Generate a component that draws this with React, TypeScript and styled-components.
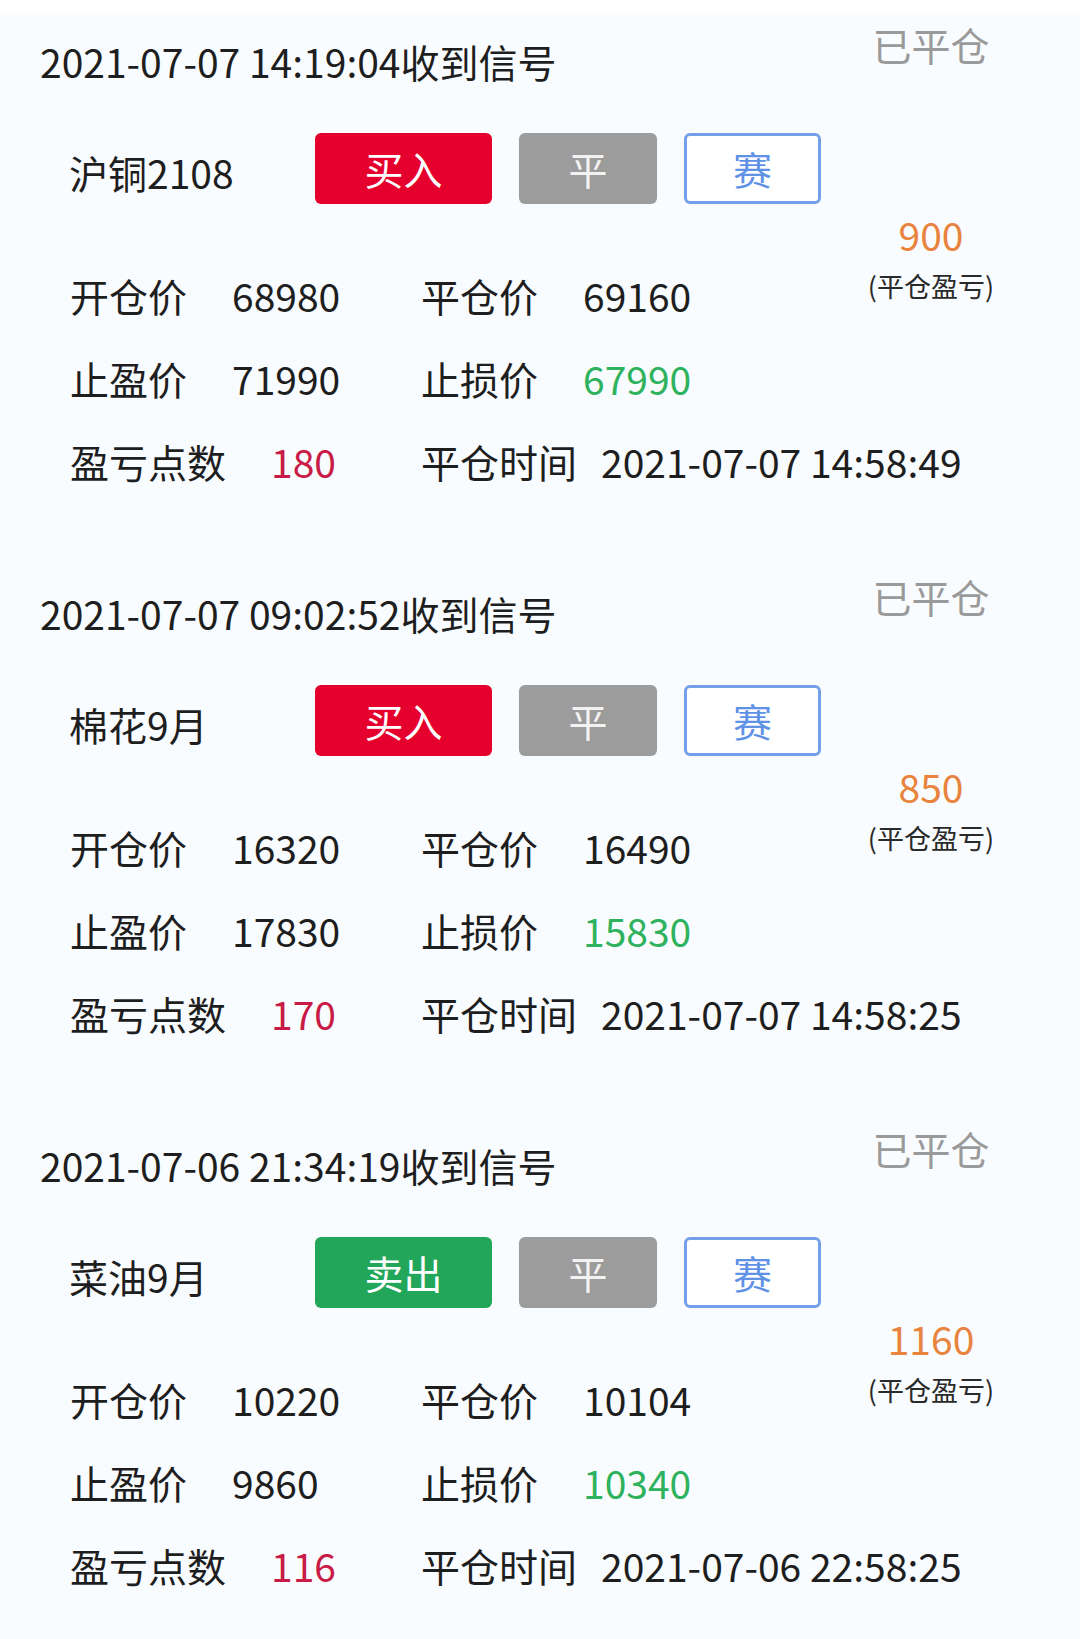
import React from "react";
import styled, { createGlobalStyle } from "styled-components";

const GlobalStyle = createGlobalStyle`
  html, body {
    margin: 0;
    padding: 0;
    background: #f9fcfe;
  }
  body {
    font-family: "Noto Sans CJK SC", "Noto Sans", sans-serif;
    color: #1e1e1e;
  }
`;

const Page = styled.div`
  width: 1080px;
  border-top: 15px solid #ffffff;
  background: #f9fcfe;
`;

const Card = styled.section`
  display: grid;
  grid-template-columns: 846px 170px;
  height: 552px;
  box-sizing: border-box;
`;

const Main = styled.div`
  display: flex;
  flex-direction: column;
  padding-top: 20px;
`;

const Header = styled.div`
  padding-left: 40px;
  font-size: 39px;
  line-height: 52px;
  color: #1e1e1e;
  white-space: nowrap;
`;

const ActionRow = styled.div`
  display: flex;
  align-items: center;
  margin-top: 46px;
  padding-left: 69px;
  height: 71px;
`;

const Product = styled.div`
  width: 246px;
  margin-top: 6px;
  font-size: 39px;
  line-height: 52px;
  color: #1e1e1e;
  white-space: nowrap;
`;

type Tone = "buy" | "sell" | "close" | "match";

const toneBg: Record<Tone, string> = {
  buy: "#e5002d",
  sell: "#22a65a",
  close: "#9c9c9c",
  match: "#ffffff",
};

const Btn = styled.div<{ $tone: Tone; $w: number }>`
  display: flex;
  align-items: center;
  justify-content: center;
  box-sizing: border-box;
  width: ${(p) => p.$w}px;
  height: 71px;
  border-radius: 6px;
  background: ${(p) => toneBg[p.$tone]};
  border: ${(p) => (p.$tone === "match" ? "3px solid #74a0ea" : "none")};
  color: ${(p) => (p.$tone === "match" ? "#5f92e6" : p.$tone === "close" ? "#f2f2f2" : "#ffffff")};
  font-size: 39px;
  line-height: 1;
  margin-right: ${(p) => (p.$tone === "match" ? 0 : 27)}px;
`;

const Grid = styled.div`
  display: grid;
  grid-template-columns: 351px 1fr;
  grid-auto-rows: 83px;
  margin-top: 49px;
  padding-left: 70px;
`;

const Cell = styled.div`
  display: flex;
  align-items: center;
  white-space: nowrap;
  font-size: 39px;
`;

const Label = styled.span`
  color: #1e1e1e;
`;

type VTone = "plain" | "loss" | "points";
const vColor: Record<VTone, string> = {
  plain: "#1e1e1e",
  loss: "#2fb25e",
  points: "#c81b45",
};

const Value = styled.span<{ $tone?: VTone; $gap?: number }>`
  margin-left: ${(p) => p.$gap ?? 45}px;
  color: ${(p) => vColor[p.$tone ?? "plain"]};
`;

const Side = styled.div`
  display: flex;
  flex-direction: column;
  align-items: center;
  padding-top: 3px;
`;

const Status = styled.div`
  font-size: 39px;
  line-height: 52px;
  color: #9a9a9a;
`;

const Profit = styled.div`
  margin-top: 142px;
  font-size: 39px;
  line-height: 44px;
  color: #e8843d;
`;

const ProfitNote = styled.div`
  margin-top: 12px;
  font-size: 27px;
  line-height: 36px;
  color: #2a2a2a;
`;

type Signal = {
  time: string;
  name: string;
  side: "buy" | "sell";
  open: string;
  close: string;
  tp: string;
  sl: string;
  points: string;
  closeTime: string;
  profit: string;
};

const signals: Signal[] = [
  {
    time: "2021-07-07 14:19:04",
    name: "沪铜2108",
    side: "buy",
    open: "68980",
    close: "69160",
    tp: "71990",
    sl: "67990",
    points: "180",
    closeTime: "2021-07-07 14:58:49",
    profit: "900",
  },
  {
    time: "2021-07-07 09:02:52",
    name: "棉花9月",
    side: "buy",
    open: "16320",
    close: "16490",
    tp: "17830",
    sl: "15830",
    points: "170",
    closeTime: "2021-07-07 14:58:25",
    profit: "850",
  },
  {
    time: "2021-07-06 21:34:19",
    name: "菜油9月",
    side: "sell",
    open: "10220",
    close: "10104",
    tp: "9860",
    sl: "10340",
    points: "116",
    closeTime: "2021-07-06 22:58:25",
    profit: "1160",
  },
];

function SignalCard({ s }: { s: Signal }) {
  return (
    <Card>
      <Main>
        <Header>{s.time}收到信号</Header>
        <ActionRow>
          <Product>{s.name}</Product>
          <Btn $tone={s.side} $w={177}>{s.side === "buy" ? "买入" : "卖出"}</Btn>
          <Btn $tone="close" $w={138}>平</Btn>
          <Btn $tone="match" $w={137}>赛</Btn>
        </ActionRow>
        <Grid>
          <Cell>
            <Label>开仓价</Label>
            <Value>{s.open}</Value>
          </Cell>
          <Cell>
            <Label>平仓价</Label>
            <Value>{s.close}</Value>
          </Cell>
          <Cell>
            <Label>止盈价</Label>
            <Value>{s.tp}</Value>
          </Cell>
          <Cell>
            <Label>止损价</Label>
            <Value $tone="loss">{s.sl}</Value>
          </Cell>
          <Cell>
            <Label>盈亏点数</Label>
            <Value $tone="points">{s.points}</Value>
          </Cell>
          <Cell>
            <Label>平仓时间</Label>
            <Value $gap={24}>{s.closeTime}</Value>
          </Cell>
        </Grid>
      </Main>
      <Side>
        <Status>已平仓</Status>
        <Profit>{s.profit}</Profit>
        <ProfitNote>(平仓盈亏)</ProfitNote>
      </Side>
    </Card>
  );
}

export default function App() {
  return (
    <>
      <GlobalStyle />
      <Page>
        {signals.map((s) => (
          <SignalCard key={s.time} s={s} />
        ))}
      </Page>
    </>
  );
}
